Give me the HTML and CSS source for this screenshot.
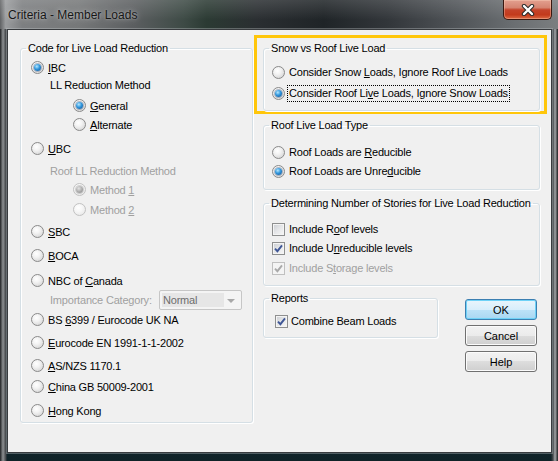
FILE: index.html
```html
<!DOCTYPE html>
<html>
  <head>
    <meta charset="UTF-8" />
    <title>Criteria - Member Loads</title>
    <link rel="stylesheet" href="styles.css">
  </head>

  <body>
    <div class="window">
      <div class="titlebar">
        <span class="title">Criteria - Member Loads</span>
        <button class="close">
          <svg width="14" height="12" viewBox="0 0 14 12">
            <path d="M3 2 L11 10 M11 2 L3 10" stroke="#2a2a2a" stroke-width="4.4" stroke-linecap="round" fill="none" />
            <path d="M3 2 L11 10 M11 2 L3 10" stroke="#ffffff" stroke-width="2.4" stroke-linecap="round" fill="none" />
          </svg>
        </button>
      </div>

      <div class="client">
        <!-- left column: code selection -->
        <fieldset class="group codes">
          <legend>Code for Live Load Reduction</legend>
          <div class="rows">
            <label class="row"><span class="radio on"></span><span><u>I</u>BC</span></label>
            <div class="row sub g0">LL Reduction Method</div>
            <label class="row deep g4"><span class="radio on"></span><span><u>G</u>eneral</span></label>
            <label class="row deep g2"><span class="radio"></span><span><u>A</u>lternate</span></label>
            <label class="row g7"><span class="radio"></span><span><u>U</u>BC</span></label>
            <div class="row sub dim g5">Roof LL Reduction Method</div>
            <label class="row deep dim g2"><span class="radio off on"></span><span>Method <u>1</u></span></label>
            <label class="row deep dim g3"><span class="radio off"></span><span>Method <u>2</u></span></label>
            <label class="row g5"><span class="radio"></span><span><u>S</u>BC</span></label>
            <label class="row g7"><span class="radio"></span><span><u>B</u>OCA</span></label>
            <label class="row g8"><span class="radio"></span><span>NBC of <u>C</u>anada</span></label>
            <div class="row sub dim g2">
              <span>Importance Category:</span>
              <div class="select">
                <span class="select-text">Normal</span>
                <span class="select-arrow"></span>
              </div>
            </div>
            <label class="row g3"><span class="radio"></span><span>BS <u>6</u>399 / Eurocode UK NA</span></label>
            <label class="row g6"><span class="radio"></span><span><u>E</u>urocode EN 1991-1-1-2002</span></label>
            <label class="row g6"><span class="radio"></span><span><u>A</u>S/NZS 1170.1</span></label>
            <label class="row g4"><span class="radio"></span><span><u>C</u>hina GB 50009-2001</span></label>
            <label class="row g7"><span class="radio"></span><span><u>H</u>ong Kong</span></label>
          </div>
        </fieldset>

        <!-- right column -->
        <div class="side">
          <div class="mark">
            <fieldset class="group snow">
              <legend>Snow vs Roof Live Load</legend>
              <div class="rows">
                <label class="row"><span class="radio"></span><span>Consider Snow <u>L</u>oads, Ignore Roof Live Loads</span></label>
                <label class="row g3"><span class="radio on"></span><span class="focus">Consider Roof Li<u>v</u>e Loads, Ignore Snow Loads</span></label>
              </div>
            </fieldset>
          </div>

          <fieldset class="group roof">
            <legend>Roof Live Load Type</legend>
            <div class="rows">
              <label class="row"><span class="radio"></span><span>Roof Loads are <u>R</u>educible</span></label>
              <label class="row g1"><span class="radio on"></span><span>Roof Loads are Unre<u>d</u>ucible</span></label>
            </div>
          </fieldset>

          <fieldset class="group stories">
            <legend>Determining Number of Stories for Live Load Reduction</legend>
            <div class="rows">
              <label class="row"><span class="check"></span><span>Include R<u>o</u>of levels</span></label>
              <label class="row g1">
                <span class="check">
                  <svg class="tick" width="9" height="9" viewBox="0 0 9 9"><path d="M1 4.6 L3.4 7.2 L8 1.4" /></svg>
                </span>
                <span>Include U<u>n</u>reducible levels</span>
              </label>
              <label class="row dim g2">
                <span class="check off">
                  <svg class="tick" width="9" height="9" viewBox="0 0 9 9"><path d="M1 4.6 L3.4 7.2 L8 1.4" /></svg>
                </span>
                <span>Include S<u>t</u>orage levels</span>
              </label>
            </div>
          </fieldset>

          <div class="bottom">
            <fieldset class="group reports">
              <legend>Reports</legend>
              <div class="rows">
                <label class="row">
                  <span class="check">
                    <svg class="tick" width="9" height="9" viewBox="0 0 9 9"><path d="M1 4.6 L3.4 7.2 L8 1.4" /></svg>
                  </span>
                  <span>Combine Beam Loads</span>
                </label>
              </div>
            </fieldset>

            <div class="buttons">
              <button class="btn default">OK</button>
              <button class="btn">Cancel</button>
              <button class="btn">Help</button>
            </div>
          </div>
        </div>
      </div>
    </div>
  </body>
</html>
```

FILE: styles.css
```css
body {
  margin: 0;
  font-family: "Liberation Sans", Arial, sans-serif;
  font-size: 11px;
  letter-spacing: -0.2px;
  color: #000;
}

.window {
  width: 558px;
  height: 461px;
  display: flex;
  flex-direction: column;
  background:
    linear-gradient(90deg, #1e2022 0, #8e9193 3px, #3e4144 6px, rgba(0, 0, 0, 0) 7px,
      rgba(0, 0, 0, 0) calc(100% - 7px), #45494c calc(100% - 5px), #a3a6a8 calc(100% - 3px), #1d1f21 100%),
    linear-gradient(#4f5356 0, #2b3135 45%, #172a31 85%, #0f2227 100%);
}

.titlebar {
  height: 29px;
  flex: none;
  display: flex;
  justify-content: space-between;
  align-items: flex-start;
  background:
    linear-gradient(180deg, rgba(255, 255, 255, 0.14), rgba(255, 255, 255, 0) 70%),
    linear-gradient(90deg, #5f6163 0, #9a9c9e 1%, #7d7f81 4%, #767879 14%, #5b5e60 24%,
      #3d4a45 33%, #2b3a33 37%, #2a2e31 46%, #1f2427 58%, #33373b 70%, #505458 82%, #6a6e71 92%, #7b7e80 100%);
}

.title {
  margin-left: 8px;
  line-height: 30px;
  font-size: 12px;
  letter-spacing: 0;
  color: #161616;
  text-shadow: 0 0 6px rgba(255, 255, 255, 0.55), 0 0 2px rgba(255, 255, 255, 0.4);
}

.close {
  width: 49px;
  height: 20px;
  margin-right: 6px;
  padding: 0;
  display: grid;
  place-items: center;
  border: 1px solid #3a1810;
  border-top: 0;
  border-radius: 0 0 5px 5px;
  background: linear-gradient(#e3a08f 0, #d58471 40%, #c4432a 52%, #c33a1c 78%, #dc6a44 100%);
  box-shadow: inset 0 0 0 1px rgba(255, 220, 200, 0.35);
}

.client {
  flex: 1;
  margin: 0 6px 8px 7px;
  padding: 12px 0 0 12px;
  border: 1px solid #383b3e;
  box-shadow: 0 0 0 1px rgba(200, 205, 210, 0.35);
  background: #f0f0f0;
  display: grid;
  grid-template-columns: 233px 277px;
  column-gap: 10px;
  align-items: start;
}

/* group boxes */
.group {
  margin: 0;
  padding: 0;
  min-width: 0;
  border: 1px solid #d5dfe5;
  border-radius: 3px;
  box-shadow: inset 1px 1px 0 #fff, 1px 1px 0 #fff;
}

.group legend {
  margin-left: 5px;
  padding: 0 2px;
  line-height: 13px;
}

.row {
  display: flex;
  align-items: center;
  height: 17px;
  white-space: nowrap;
}

.side .row {
  height: 18px;
}

.codes .rows {
  padding: 4px 0 3px 10px;
}

.codes .sub {
  margin-left: 19px;
}

.codes .deep {
  margin-left: 42px;
}

.dim {
  color: #a0a0a0;
}

.g0 { margin-top: 0; }
.g1 { margin-top: 1px; }
.g2 { margin-top: 2px; }
.g3 { margin-top: 3px; }
.g4 { margin-top: 4px; }
.g5 { margin-top: 5px; }
.g6 { margin-top: 6px; }
.g7 { margin-top: 7px; }
.g8 { margin-top: 8px; }

/* radio buttons */
.radio {
  flex: none;
  width: 13px;
  height: 13px;
  margin-right: 4px;
  box-sizing: border-box;
  border: 1px solid #8a8a8a;
  border-radius: 50%;
  display: grid;
  place-items: center;
  background: radial-gradient(circle at 40% 35%, #ffffff 0, #f3f3f3 35%, #cdcdcd 100%);
}

.radio.on::after {
  content: "";
  width: 7px;
  height: 7px;
  border-radius: 50%;
  background: radial-gradient(circle at 40% 35%, #b4e8ff 0, #3196dc 45%, #0c4a8c 100%);
  box-shadow: 0 0 0 1px rgba(40, 70, 110, 0.35);
}

.radio.off {
  border-color: #c2c2c2;
  background: radial-gradient(circle at 40% 35%, #ffffff 0, #f6f6f6 40%, #e2e2e2 100%);
}

.radio.off.on::after {
  background: radial-gradient(circle at 40% 35%, #e4e4e4 0, #a9a9a9 55%, #8c8c8c 100%);
  box-shadow: 0 0 0 1px rgba(120, 120, 120, 0.3);
}

/* check boxes */
.check {
  flex: none;
  width: 13px;
  height: 13px;
  margin-right: 4px;
  box-sizing: border-box;
  border: 1px solid #8e8f8f;
  display: grid;
  place-items: center;
  background: linear-gradient(135deg, #c9ccd1 0, #e6e7e9 50%, #f7f7f7 100%);
  box-shadow: inset 0 0 0 1px #f4f4f4;
}

.check.off {
  border-color: #c0c0c0;
  background: #f4f4f4;
}

.tick path {
  fill: none;
  stroke: #3f5696;
  stroke-width: 1.9;
}

.check.off .tick path {
  stroke: #a9a9a9;
}

.focus {
  outline: 1px dotted #000;
  outline-offset: 1px;
  line-height: 13px;
}

/* disabled drop-down */
.select {
  margin: 0 10px 0 auto;
  width: 83px;
  height: 20px;
  box-sizing: border-box;
  border: 1px solid #c6c6c6;
  border-radius: 2px;
  padding: 2px;
  display: flex;
  align-items: stretch;
  background: #f4f4f4;
}

.select-text {
  width: 61px;
  padding-left: 1px;
  line-height: 14px;
  color: #6d6d6d;
  background: #e6e6e6;
}

.select-arrow {
  margin: 6px 4px 0 auto;
  width: 0;
  height: 0;
  border-left: 4px solid transparent;
  border-right: 4px solid transparent;
  border-top: 4px solid #a8a8a8;
}

/* right column */
.side {
  display: flex;
  flex-direction: column;
}

.mark {
  margin: -7px -7px 0 -9px;
  padding: 4px 4px 0 6px;
  border: 3px solid #ffc60a;
}

.snow .rows {
  padding: 8px 0 8px 8px;
}

.roof {
  margin-top: 5px;
}

.roof .rows {
  padding: 11px 0 9px 8px;
}

.stories {
  margin-top: 7px;
}

.stories .rows {
  padding: 10px 0 8px 8px;
}

.bottom {
  margin-top: 6px;
  display: flex;
  justify-content: space-between;
  align-items: flex-start;
}

.reports {
  width: 175px;
  box-sizing: border-box;
}

.reports .rows {
  padding: 7px 0 7px 11px;
}

.reports .check {
  margin-right: 3px;
}

.buttons {
  margin: 7px 3px 0 0;
  display: flex;
  flex-direction: column;
  gap: 5px;
}

.btn {
  width: 72px;
  height: 21px;
  padding: 0;
  font-family: "Liberation Sans", Arial, sans-serif;
  font-size: 11px;
  color: #000;
  border: 1px solid #707070;
  border-radius: 3px;
  background: linear-gradient(#f2f2f2 0, #ebebeb 50%, #dddddd 50%, #cfcfcf 100%);
  box-shadow: inset 0 0 0 1px #fbfbfb;
}

.btn.default {
  border-color: #3c7fb1;
  background: linear-gradient(#e9f5fc 0, #d8eefb 50%, #bde3f8 50%, #a9d7f2 100%);
  box-shadow: inset 0 0 0 1px #6fd2f7;
}
```
